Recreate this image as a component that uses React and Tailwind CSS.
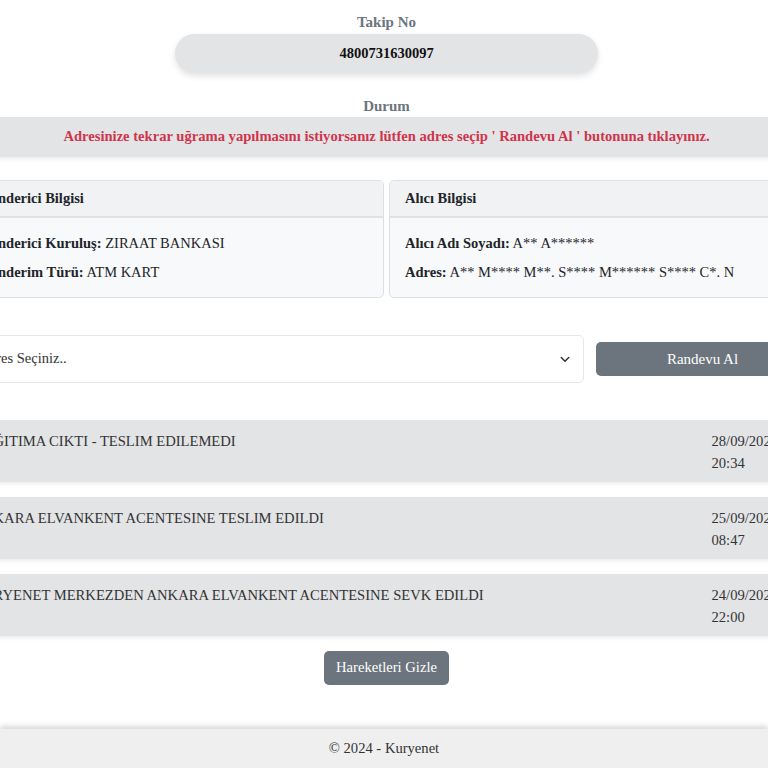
import React from 'react';

const movements = [
  { text: 'DAĞITIMA CIKTI - TESLIM EDILEMEDI', date: '28/09/2024', time: '20:34' },
  { text: 'ANKARA ELVANKENT ACENTESINE TESLIM EDILDI', date: '25/09/2024', time: '08:47' },
  { text: 'KURYENET MERKEZDEN ANKARA ELVANKENT ACENTESINE SEVK EDILDI', date: '24/09/2024', time: '22:00' },
];

const InfoCard = ({ title, rows }) => (
  <div className="rounded-[5px] border border-[#dcdfe3] bg-[#f8f9fa] overflow-hidden">
    <div className="h-[37px] flex items-center px-[15px] bg-[#f1f2f4] border-b-2 border-[#dfe1e4] font-bold text-[14.5px] text-[#212529]">
      {title}
    </div>
    <div className="px-[15px] pt-[15px] pb-[15px] flex flex-col gap-[9px] text-[14.5px] leading-[20px] text-[#212529]">
      {rows.map((r) => (
        <p key={r.label}>
          <span className="font-bold">{r.label}:</span> {r.value}
        </p>
      ))}
    </div>
  </div>
);

export default function App() {
  return (
    <div className="min-h-screen flex flex-col bg-white overflow-hidden font-['Liberation_Serif',serif] text-[#212529]">
      <main className="flex-1 flex justify-center pl-[5px]">
        <div className="w-[846px] shrink-0 flex flex-col pt-[12px]">
          <p className="text-center font-bold text-[15px] leading-[20px] text-[#6c757d]">Takip No</p>
          <div className="mt-[2px] mx-auto w-[423px] h-[39px] rounded-full bg-[#e3e4e6] shadow-[0_3px_6px_rgba(0,0,0,0.12)] flex items-center justify-center font-bold text-[14.5px] text-[#111]">
            4800731630097
          </div>

          <p className="mt-[23px] text-center font-bold text-[15px] leading-[20px] text-[#6c757d]">Durum</p>
          <div className="mt-[1px] h-[40px] bg-[#e3e4e6] shadow-[0_2px_4px_rgba(0,0,0,0.08)] flex items-center justify-center font-bold text-[14.6px] text-[#d0344c]">
            Adresinize tekrar uğrama yapılmasını istiyorsanız lütfen adres seçip ' Randevu Al ' butonuna tıklayınız.
          </div>

          <div className="mt-[23px] grid grid-cols-2 gap-[5px]">
            <InfoCard
              title="Gönderici Bilgisi"
              rows={[
                { label: 'Gönderici Kuruluş', value: 'ZIRAAT BANKASI' },
                { label: 'Gönderim Türü', value: 'ATM KART' },
              ]}
            />
            <InfoCard
              title="Alıcı Bilgisi"
              rows={[
                { label: 'Alıcı Adı Soyadı', value: 'A** A******' },
                { label: 'Adres', value: 'A** M**** M**. S**** M****** S**** C*. N' },
              ]}
            />
          </div>

          <div className="mt-[37px] flex items-center gap-[12px]">
            <div className="w-[620px] h-[48px] rounded-[5px] border border-[#e5e7eb] bg-white flex items-center justify-between pl-[14px] pr-[12px] text-[14.5px] text-[#333]">
              <span>Adres Seçiniz..</span>
              <svg width="12" height="12" viewBox="0 0 16 16" fill="none" stroke="#333" strokeWidth="2" strokeLinecap="round" strokeLinejoin="round">
                <path d="M3 6l5 5 5-5" />
              </svg>
            </div>
            <button className="flex-1 h-[34px] rounded-[5px] bg-[#6c757d] text-white text-[15px]">Randevu Al</button>
          </div>

          <div className="mt-[37px] flex flex-col gap-[15px]">
            {movements.map((m) => (
              <div key={m.date} className="h-[62px] bg-[#e3e4e6] shadow-[0_2px_4px_rgba(0,0,0,0.08)] flex justify-between pl-[9px] pt-[10px] text-[14.6px] leading-[22px] text-[#333]">
                <p>{m.text}</p>
                <div className="w-[86px] mr-[12px]">
                  <p>{m.date}</p>
                  <p>{m.time}</p>
                </div>
              </div>
            ))}
          </div>

          <div className="mt-[15px] flex justify-center">
            <button className="h-[34px] px-[12px] rounded-[5px] bg-[#6c757d] text-white text-[14.6px]">Hareketleri Gizle</button>
          </div>
        </div>
      </main>
      <footer className="h-[39px] shrink-0 bg-[#efefef] shadow-[0_-3px_5px_rgba(0,0,0,0.15)] flex items-center justify-center text-[14.6px] text-[#333]">
        © 2024 - Kuryenet
      </footer>
    </div>
  );
}
